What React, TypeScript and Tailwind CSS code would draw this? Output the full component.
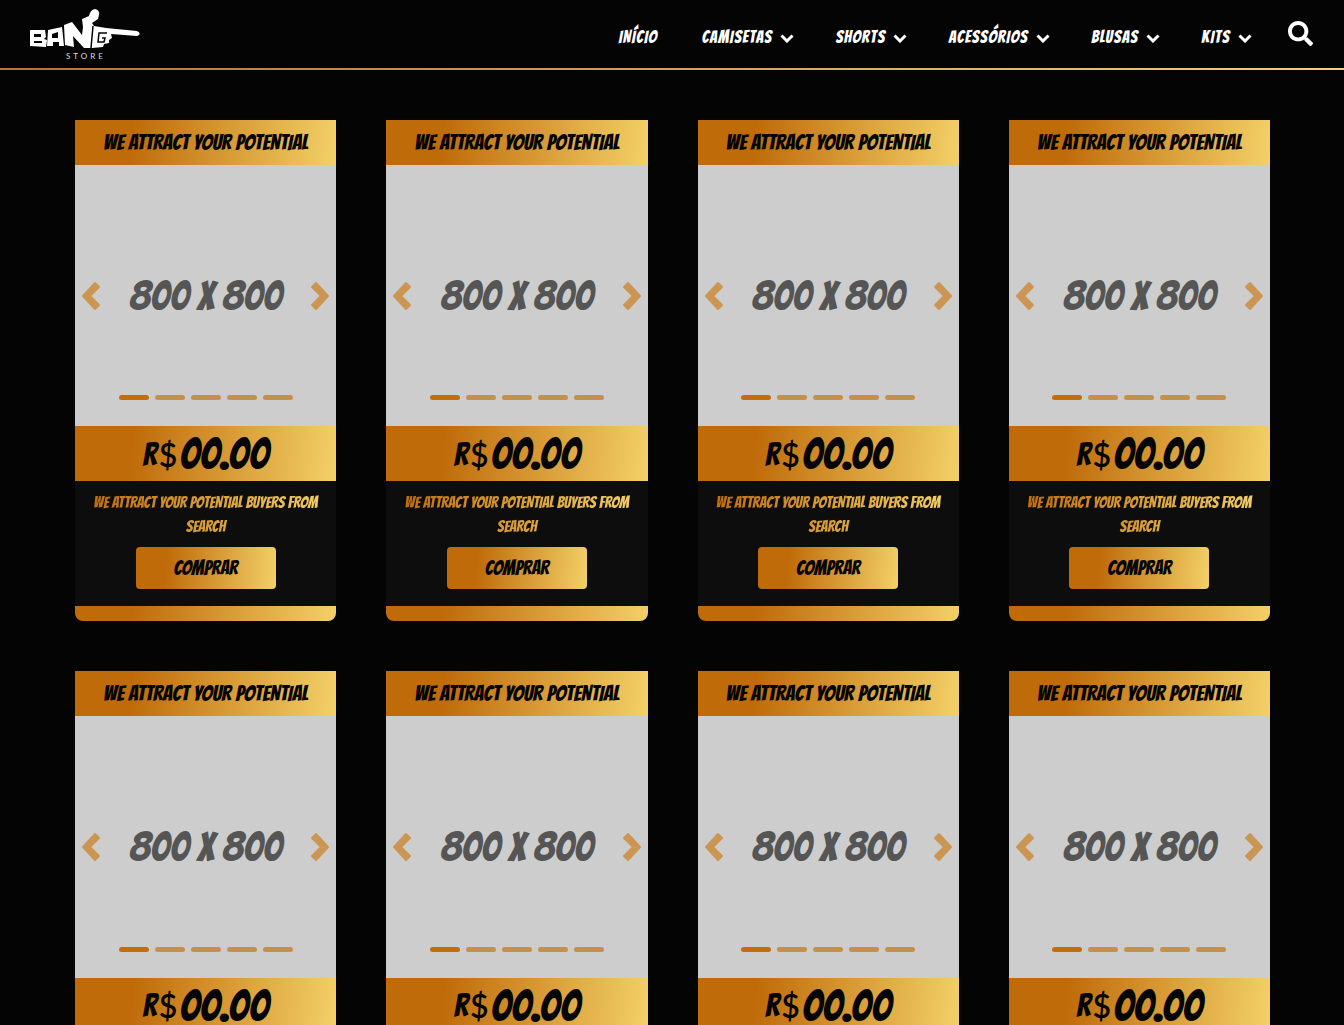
import { FaSearch } from "react-icons/fa";

const font = "font-['Bangers','Liberation_Sans_Narrow','Liberation_Sans',sans-serif]";
const gold = "bg-[linear-gradient(95deg,#bf6b0a_22%,#f3d067)]";
const menus = ["Camisetas", "Shorts", "Acessórios", "Blusas", "Kits"];
const products = [1, 2, 3, 4, 5, 6, 7, 8];

function Logo() {
  return (
    <svg viewBox="0 0 110 50" className="h-[50px] w-[110px] overflow-visible" role="img" aria-label="Bang Store">
      <g fill="#fff" fillRule="evenodd">
        <path d="M0 21L15 21L16 28L14 30L17 31L16 38L0 37ZM4 25V28H11V25ZM4 32V34H12V32Z" />
        <path d="M18 21L32 18L34 37H29V33H23V37H17ZM22 25V29H28V23Z" />
        <path d="M34 16L42 13L52 26L53 18L52 10L59 7Q60 1 65 0Q70 1 69 6L68 10L62 14L64 17L76 19L107 22Q111 24 109 26L107 27L81 25L82 29L79 31L79 34L74 35L73 38L62 39H54L43 27L44 38L35 36Z" />
      </g>
      <path d="M63 17L61 39M77 24H69L68 33H74L75 29H72" fill="none" stroke="#040404" strokeWidth="1.5" />
      <text x="36" y="50" fill="#ddd" fontSize="8" letterSpacing="3" fontFamily="Lato, sans-serif">STORE</text>
    </svg>
  );
}

function NavChevron() {
  return (
    <svg viewBox="0 0 14 9" className="h-[9px] w-[14px]" aria-hidden="true">
      <path d="M1.5 1.5L7 7L12.5 1.5" fill="none" stroke="currentColor" strokeWidth="3" />
    </svg>
  );
}

function Arrow({ d }: { d: string }) {
  return (
    <svg viewBox="0 0 20 30" className="h-[30px] w-5" aria-hidden="true">
      <path d={d} fill="currentColor" stroke="currentColor" strokeWidth="2" strokeLinejoin="round" />
    </svg>
  );
}

function Card({ id }: { id: number }) {
  return (
    <article className="overflow-hidden rounded-b-lg bg-[#0d0d0d] text-center">
      <h2 className={`flex h-[45px] items-center justify-center text-[22px] text-[#050505] ${gold}`}>WE ATTRACT YOUR POTENTIAL</h2>
      <div className="relative flex aspect-square items-center justify-center bg-[#cdcdcd] text-[41px] text-[#555]">
        <span>800 X 800</span>
        <button aria-label="Anterior" className="absolute left-0 flex h-full w-8 items-center justify-center text-[#cb9653]"><Arrow d="M14 2L18 6L9 15L18 24L14 28L2 15Z" /></button>
        <button aria-label="Próximo" className="absolute right-0 flex h-full w-8 items-center justify-center text-[#cb9653]"><Arrow d="M6 2L2 6L11 15L2 24L6 28L18 15Z" /></button>
        <div className="absolute bottom-[26px] flex gap-[6px]">
          {[1, 2, 3, 4, 5].map((n) => (
            <button key={n} aria-label={`Imagem ${n} do produto ${id}`} className="h-[5px] w-[30px] rounded-full bg-[#c7904a] first:bg-[#c56d09]" />
          ))}
        </div>
      </div>
      <p className={`flex h-[55px] items-center justify-center gap-[2px] pt-[2px] leading-none text-[#050505] ${gold}`}>
        <span className="text-[32px]">R</span>
        <span className="font-['Lato'] text-[32px] font-semibold">$</span>
        <span className="text-[43px]">00.00</span>
      </p>
      <div className="flex h-[125px] flex-col items-center px-3 pt-[10px]">
        <p className="bg-[linear-gradient(95deg,#bf6b0a,#f3d067)] bg-clip-text text-base leading-6 text-transparent">WE ATTRACT YOUR POTENTIAL BUYERS FROM SEARCH</p>
        <button className={`mt-2 h-[42px] w-[140px] rounded text-xl text-[#050505] ${gold}`}>COMPRAR</button>
      </div>
      <div className={`h-[15px] ${gold}`} />
    </article>
  );
}

export default function App() {
  return (
    <div className={`min-h-screen bg-[#040404] ${font}`}>
      <header className="bg-[linear-gradient(95deg,#b57231,#efd07a)] pb-[2px]">
        <div className="flex h-[68px] items-center justify-between bg-[#040404] pr-[31px] pl-[30px]">
          <a href="#inicio" aria-label="Início"><Logo /></a>
          <nav className="flex items-center text-[17px] tracking-[1px] text-white">
            <a href="#inicio" className="mr-11 pt-2">INÍCIO</a>
            {menus.map((m, i) => (
              <button key={m} className={`flex items-center gap-2 pt-2 uppercase ${i === 4 ? "mr-9" : "mr-[41px]"}`}>{m}<NavChevron /></button>
            ))}
            <button aria-label="Buscar" className="pb-[2px] text-[25px]"><FaSearch /></button>
          </nav>
        </div>
      </header>
      <main className="grid grid-cols-4 gap-[50px] pt-[50px] pr-[74px] pl-[75px]">
        {products.map((id) => <Card key={id} id={id} />)}
      </main>
    </div>
  );
}
